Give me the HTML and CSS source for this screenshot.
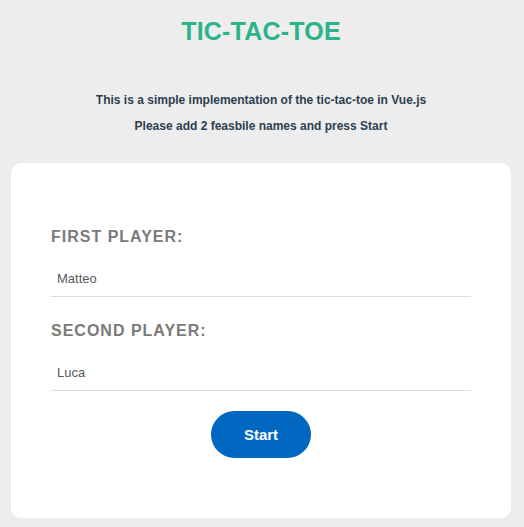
FILE: index.html
```html
<!DOCTYPE html>
<html>
<head>
<meta charset="utf-8">
<link rel="stylesheet" href="styles.css">
</head>
<body>
<div class="app">
  <h1 class="title">TIC-TAC-TOE</h1>
  <p class="intro intro-first">This is a simple implementation of the tic-tac-toe in Vue.js</p>
  <p class="intro">Please add 2 feasbile names and press Start</p>
  <div class="card">
    <label class="label">FIRST PLAYER:</label>
    <input class="field" type="text" value="Matteo">
    <label class="label label-second">SECOND PLAYER:</label>
    <input class="field" type="text" value="Luca">
    <div class="actions">
      <button class="start">Start</button>
    </div>
  </div>
</div>
</body>
</html>
```
FILE: styles.css
```css
html, body {
  margin: 0;
  padding: 0;
  background: #ededed;
}
body {
  font-family: "Liberation Sans", Arial, sans-serif;
  color: #2c3e50;
}
.app {
  padding: 16px 13px 9px 11px;
}
.title {
  margin: 0;
  text-align: center;
  font-size: 25px;
  line-height: 30px;
  font-weight: bold;
  letter-spacing: 0.2px;
  color: #2db38c;
}
.intro {
  margin: 0;
  text-align: center;
  font-size: 12px;
  line-height: 14px;
  font-weight: bold;
  color: #2c3e50;
}
.intro-first {
  margin-top: 47px;
  margin-bottom: 12px;
}
.card {
  margin-top: 30px;
  background: #fff;
  border-radius: 10px;
  padding: 64px 40px 60px;
  display: flex;
  flex-direction: column;
}
.label {
  display: block;
  font-size: 16px;
  line-height: 19px;
  font-weight: bold;
  letter-spacing: 1px;
  color: #7a7a7a;
  margin-bottom: 14px;
}
.label-second {
  margin-top: 24px;
}
.field {
  display: block;
  box-sizing: border-box;
  width: 100%;
  height: 37px;
  border: none;
  border-bottom: 1px solid #dcdcdc;
  padding: 0 6px;
  font-family: "Liberation Sans", Arial, sans-serif;
  font-size: 13px;
  color: #555b61;
  background: transparent;
  outline: none;
}
.actions {
  display: flex;
  justify-content: center;
  margin-top: 20px;
}
.start {
  width: 100px;
  height: 47px;
  border: none;
  border-radius: 24px;
  background: #0068c0;
  color: #fff;
  font-family: "Liberation Sans", Arial, sans-serif;
  font-size: 15px;
  font-weight: bold;
}
```
